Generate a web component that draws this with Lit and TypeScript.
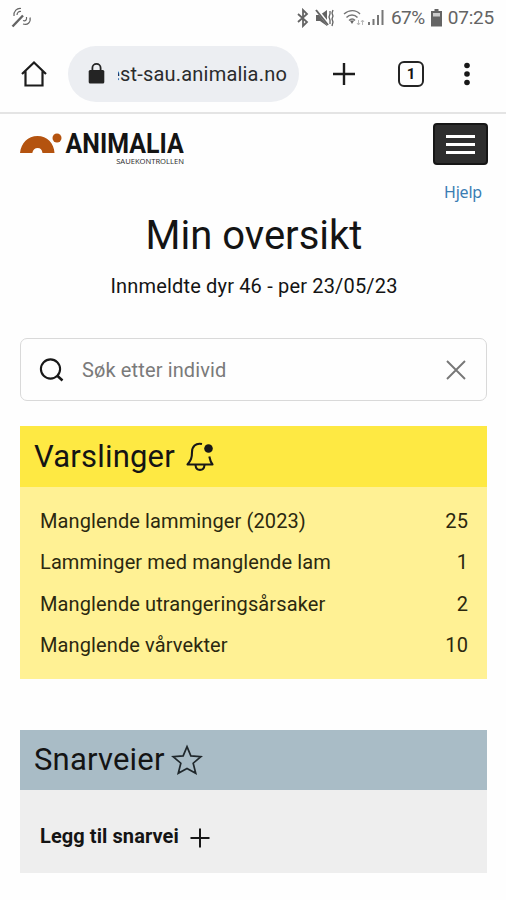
import { LitElement, html, css, svg } from "lit";
import { customElement } from "lit/decorators.js";

const alerts: [string, number][] = [
  ["Manglende lamminger (2023)", 25],
  ["Lamminger med manglende lam", 1],
  ["Manglende utrangeringsårsaker", 2],
  ["Manglende vårvekter", 10],
];

const signalBars = [3, 6, 10, 15];

@customElement("app-root")
export class AppRoot extends LitElement {
  static styles = css`
    :host {
      display: block;
      height: 900px;
      overflow: hidden;
      background: #fefefe;
      color: #141414;
      font: 400 20px/24px Roboto, sans-serif;
    }
    * { box-sizing: border-box; }
    svg { display: block; flex: none; }
    .status {
      height: 36px;
      padding: 0 12px 0 11px;
      display: flex;
      align-items: center;
      color: #646464;
    }
    .status .right { margin-left: auto; display: flex; align-items: center; }
    .right svg { margin-right: 6px; }
    .right .mute { margin-right: 8px; }
    .right .wifi { margin-right: 3px; }
    .pct { font-size: 19px; margin-right: 6px; letter-spacing: -0.5px; }
    .clock { font-size: 19px; letter-spacing: -0.2px; }
    .bar {
      height: 78px;
      border-bottom: 2px solid #e4e4e4;
      display: flex;
      align-items: center;
      padding: 0 0 1px 20px;
    }
    .url {
      width: 231px;
      height: 56px;
      margin-left: 20px;
      border-radius: 28px;
      background: #eceef2;
      display: flex;
      align-items: center;
      padding-left: 20px;
    }
    .host {
      width: 169px;
      margin-left: 13px;
      overflow: hidden;
      display: flex;
      justify-content: flex-end;
      white-space: nowrap;
      color: #2a2b2d;
      letter-spacing: 0.2px;
    }
    .add { margin-left: 33px; }
    .tab {
      width: 26px;
      height: 26px;
      margin-left: 42px;
      border: 2.5px solid #242424;
      border-radius: 6px;
      font-weight: 700;
      font-size: 15px;
      line-height: 22px;
      text-align: center;
    }
    .dots { margin-left: 40px; }
    .head {
      height: 90px;
      padding: 9px 18px 0 20px;
      display: flex;
      justify-content: space-between;
    }
    .logo { display: flex; padding-top: 9px; }
    .word { margin-left: 5px; display: flex; flex-direction: column; align-items: flex-end; width: 117px; }
    .name {
      font: 700 28px/24px Roboto, sans-serif;
      white-space: nowrap;
      transform: scaleX(0.89);
      transform-origin: right;
    }
    .sub { font: 400 7.6px/9px "Noto Sans", sans-serif; margin-top: 1px; white-space: nowrap; color: #333; }
    .side { display: flex; flex-direction: column; align-items: flex-end; }
    .menu {
      width: 55px;
      height: 42px;
      border-radius: 4px;
      border: 2px solid #161616;
      background: #2e2e2e;
      display: flex;
      flex-direction: column;
      align-items: center;
      justify-content: center;
      gap: 5px;
    }
    .menu span { width: 29px; height: 3px; background: #fff; }
    .help { font: 400 16px/20px "Noto Sans", sans-serif; color: #3a7db3; margin: 17px 6px 0 0; letter-spacing: -0.2px; }
    h1 {
      font-weight: 400;
      font-size: 40px;
      line-height: 48px;
      margin: 8px 0 0 2px;
      text-align: center;
    }
    .info { text-align: center; margin: 14px 0 0 2px; letter-spacing: 0.17px; }
    .search {
      height: 63px;
      margin: 40px 19px 0 20px;
      border: 1.5px solid #d9d9d9;
      border-radius: 7px;
      display: flex;
      align-items: center;
      padding: 0 19px 0 18px;
    }
    .ph { margin-left: 18px; color: #7a7a7a; flex: 1; letter-spacing: 0.13px; }
    .card { margin: 25px 19px 0 20px; }
    .title {
      height: 61px;
      padding-left: 14px;
      display: flex;
      align-items: center;
      font-size: 31px;
      letter-spacing: 0.2px;
      background: #fee943;
    }
    .list { background: #fff194; height: 192px; padding: 13px 19px 0 20px; color: #2b280f; letter-spacing: 0.11px; }
    .row { display: flex; justify-content: space-between; height: 41.5px; align-items: center; }
    .shortcuts { margin-top: 51px; }
    .shortcuts .title { background: #a9bcc6; height: 60px; }
    .add-row {
      background: #eee;
      height: 83px;
      padding: 9px 0 0 20px;
      display: flex;
      align-items: center;
      font-weight: 700;
      letter-spacing: 0.08px;
    }
    .bell { margin-left: 10px; }
    .star { margin-left: 6px; }
    .plus { margin: 3px 0 0 11px; }
  `;

  render() {
    return html`
      <div class="status">
        <svg width="22" height="24" viewBox="0 0 22 24" fill="none" stroke="#646464">
          <path d="M1.500 20.500 12 9.500" stroke-width="2.400" />
          <path d="M3 10C2.500 5 6 2 10 2.500M6 9c0-2.500 2-4 4-3.500M12 14.500c2.500 1 4-.5 3.500-3.500M12 18c5 1.500 8-2 7-6.500" stroke-width="1.200" />
        </svg>
        <div class="right">
          <svg width="12" height="20" viewBox="0 0 12 20" fill="none" stroke="#646464" stroke-width="1.800">
            <path d="M1 6 10 14 6 18V2l4 4L1 14" />
          </svg>
          <svg class="mute" width="20" height="20" viewBox="0 0 20 20" fill="#646464">
            <path d="M1 7h4l7-5v16l-7-5H1z" />
            <path d="M2 2 14 17" stroke="#fefefe" stroke-width="3.200" />
            <path d="M1 2 13 17" stroke="#646464" stroke-width="2" />
            <path d="M15 3v3l-1 3 1 3v4M18 2l-1 3 1 3-1 3 1 3-1 4" fill="none" stroke="#646464" stroke-width="1.300" />
          </svg>
          <svg class="wifi" width="22" height="20" viewBox="0 0 22 20" fill="none" stroke="#757575" stroke-width="1.400">
            <path d="M1 6C6 1.500 13 1.500 17 6M3.500 9.500c3-3.300 8-3.300 11 0M6 12.500c2-2 4.500-2 6 0" />
            <path d="M6.800 12.500 9 16l2.200-3.500z" fill="#646464" stroke="none" />
            <path d="M15.500 12v5m-1.500-2 1.500 2 1.500-2M19.500 17v-5m-1.500 2 1.500-2 1.500 2" stroke="#b8b8b8" stroke-width="1" />
          </svg>
          <svg width="17" height="20" viewBox="0 0 17 20" fill="#777">
            ${signalBars.map((h, i) => svg`<rect x=${i * 4.5} y=${17 - h} width="2" height=${h} />`)}
          </svg>
          <span class="pct">67%</span>
          <svg width="11" height="18" viewBox="0 0 11 18" fill="#646464">
            <path d="M3.500 0h4v2H11v15.500H0V2h3.500z" />
            <path d="M2 4h7v3.500H2z" fill="#ccc" />
          </svg>
          <span class="clock">07:25</span>
        </div>
      </div>

      <div class="bar">
        <svg width="28" height="28" viewBox="0 0 28 28" fill="none" stroke="#1c1c1c" stroke-width="2.200">
          <path d="M2 14 14 2.500 26 14M5.500 11v14.500h17V11" />
        </svg>
        <div class="url">
          <svg width="17" height="22" viewBox="0 0 17 22">
            <path d="M4.400 9V5a4.100 4.100 0 0 1 8.200 0V9" fill="none" stroke="#242424" stroke-width="1.800" />
            <rect x=".7" y="7" width="15.600" height="13.500" rx="1.500" fill="#242424" />
          </svg>
          <div class="host"><span>est-sau.animalia.no</span></div>
        </div>
        <svg class="add" width="24" height="24" viewBox="0 0 24 24" stroke="#1c1c1c" stroke-width="2.400">
          <path d="M1 12h22M12 1v22" />
        </svg>
        <div class="tab">1</div>
        <svg class="dots" width="6" height="24" viewBox="0 0 6 24" fill="#181818">
          <circle cx="3" cy="3.500" r="2.800" /><circle cx="3" cy="12" r="2.800" /><circle cx="3" cy="20.500" r="2.800" />
        </svg>
      </div>

      <div class="head">
        <div class="logo">
          <svg width="42" height="22" viewBox="0 0 42 22" fill="#b4530f">
            <path d="M0 21C1 11 8 4 17.500 4S34 11 34.500 21H22.500c-.5-3.500-2-5-4.800-5s-4.700 1.500-5.400 5z" />
            <circle cx="37" cy="6" r="4.500" />
          </svg>
          <div class="word">
            <div class="name">ANIMALIA</div>
            <div class="sub">SAUEKONTROLLEN</div>
          </div>
        </div>
        <div class="side">
          <div class="menu"><span></span><span></span><span></span></div>
          <div class="help">Hjelp</div>
        </div>
      </div>

      <h1>Min oversikt</h1>
      <div class="info">Innmeldte dyr 46 - per 23/05/23</div>

      <div class="search">
        <svg width="25" height="26" viewBox="0 0 25 26" fill="none" stroke="#181818" stroke-width="2.100">
          <circle cx="11.500" cy="12" r="9.600" /><path d="m18 18.500 5.500 5" stroke-width="2.500" />
        </svg>
        <span class="ph">Søk etter individ</span>
        <svg width="22" height="22" viewBox="0 0 22 22" stroke="#777" stroke-width="1.900">
          <path d="m2 2 18 18M20 2 2 20" />
        </svg>
      </div>

      <section class="card">
        <div class="title">
          <span>Varslinger</span>
          <svg class="bell" width="30" height="32" viewBox="0 0 30 32" fill="none" stroke="#181818" stroke-width="2.100" stroke-linejoin="round">
            <path d="M17 3C10.500 1.500 7 6 7 11c0 6-1 8-4.500 12.500h25C26 21.500 25 19 24.300 15.500" />
            <path d="M10.500 24c.5 6.500 8.500 6.500 9 0" />
            <circle cx="23.500" cy="7.500" r="4.300" fill="#181818" stroke="none" />
          </svg>
        </div>
        <div class="list">
          ${alerts.map(([label, n]) => html`<div class="row"><span>${label}</span><span>${n}</span></div>`)}
        </div>
      </section>

      <section class="card shortcuts">
        <div class="title">
          <span>Snarveier</span>
          <svg class="star" width="32" height="32" viewBox="0 0 30 30" fill="none" stroke="#20282c" stroke-width="1.600">
            <path d="m15 2.500 3.600 8.700 9.400.7-7.200 6.100 2.400 9.500L15 23l-8.200 4.500L9.200 18 2 11.900l9.400-.7z" />
          </svg>
        </div>
        <div class="add-row">
          <span>Legg til snarvei</span>
          <svg class="plus" width="20" height="20" viewBox="0 0 20 20" stroke="#181818" stroke-width="2">
            <path d="M.5 10h19M10 .5v19" />
          </svg>
        </div>
      </section>
    `;
  }
}
